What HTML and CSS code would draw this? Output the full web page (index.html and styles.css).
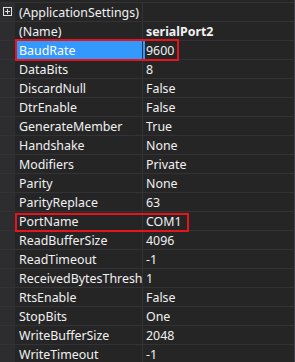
FILE: index.html
```html
<!DOCTYPE html>
<html lang="en">
<head>
<meta charset="UTF-8">
<title>Properties</title>
<link rel="stylesheet" href="styles.css">
</head>
<body>

<div class="grid">
<div class="row category">
<div class="gutter"><span class="expander"></span></div>
<div class="name">(ApplicationSettings)</div>
<div class="value"></div>
</div>
<div class="row"><div class="gutter"></div><div class="name">(Name)</div><div class="value bold">serialPort2</div></div>
<div class="row selected"><div class="gutter"></div><div class="name">BaudRate</div><div class="value">9600</div></div>
<div class="row"><div class="gutter"></div><div class="name">DataBits</div><div class="value">8</div></div>
<div class="row"><div class="gutter"></div><div class="name">DiscardNull</div><div class="value">False</div></div>
<div class="row"><div class="gutter"></div><div class="name">DtrEnable</div><div class="value">False</div></div>
<div class="row"><div class="gutter"></div><div class="name">GenerateMember</div><div class="value">True</div></div>
<div class="row"><div class="gutter"></div><div class="name">Handshake</div><div class="value">None</div></div>
<div class="row"><div class="gutter"></div><div class="name">Modifiers</div><div class="value">Private</div></div>
<div class="row"><div class="gutter"></div><div class="name">Parity</div><div class="value">None</div></div>
<div class="row"><div class="gutter"></div><div class="name">ParityReplace</div><div class="value">63</div></div>
<div class="row"><div class="gutter"></div><div class="name">PortName</div><div class="value">COM1</div></div>
<div class="row"><div class="gutter"></div><div class="name">ReadBufferSize</div><div class="value">4096</div></div>
<div class="row"><div class="gutter"></div><div class="name">ReadTimeout</div><div class="value">-1</div></div>
<div class="row"><div class="gutter"></div><div class="name">ReceivedBytesThresh</div><div class="value">1</div></div>
<div class="row"><div class="gutter"></div><div class="name">RtsEnable</div><div class="value">False</div></div>
<div class="row"><div class="gutter"></div><div class="name">StopBits</div><div class="value">One</div></div>
<div class="row"><div class="gutter"></div><div class="name">WriteBufferSize</div><div class="value">2048</div></div>
<div class="row"><div class="gutter"></div><div class="name">WriteTimeout</div><div class="value">-1</div></div>

<div class="mark mark-baud"></div>
<div class="mark mark-port"></div>
</div>

</body>
</html>
```

FILE: styles.css
```css
body {
    margin: 0;
    padding: 0;
    background-color: #252526;
    font-family: "Noto Sans", "Noto Sans CJK SC", sans-serif;
    font-size: 12.4px;
    color: #f1f1f1;
    overflow: hidden;
}

.grid {
    position: relative;
    width: 294px;
    padding-top: 2px;
    border-right: 1px solid #3f3f46;
}

.row {
    display: grid;
    grid-template-columns: 15px 128px 1fr;
    height: 18px;
    border-top: 1px solid #333337;
}

.gutter {
    background-color: #2d2d30;
    position: relative;
}

.name {
    padding: 1px 0 0 4px;
    line-height: 17px;
    white-space: nowrap;
    overflow: hidden;
    border-right: 1px solid #333337;
}

.value {
    padding: 1px 0 0 3px;
    line-height: 17px;
    white-space: nowrap;
    overflow: hidden;
}

.bold {
    font-weight: bold;
}

.selected .name {
    background-color: #3399ff;
    color: #fff;
}

.selected .value {
    box-shadow: inset 2px 0 0 #3399ff;
}

.expander {
    position: absolute;
    left: 3px;
    top: 4px;
    width: 7px;
    height: 7px;
    border: 1px solid #e0e0e0;
}

.expander::before,
.expander::after {
    content: "";
    position: absolute;
    background-color: #e0e0e0;
}

.expander::before {
    left: 1px;
    top: 3px;
    width: 5px;
    height: 1px;
}

.expander::after {
    left: 3px;
    top: 1px;
    width: 1px;
    height: 5px;
}

.mark {
    position: absolute;
    border: 2px solid #e8141c;
}

.mark-baud {
    left: 15px;
    top: 39px;
    width: 160px;
    height: 18px;
}

.mark-port {
    left: 15px;
    top: 213px;
    width: 170px;
    height: 15px;
}
```
